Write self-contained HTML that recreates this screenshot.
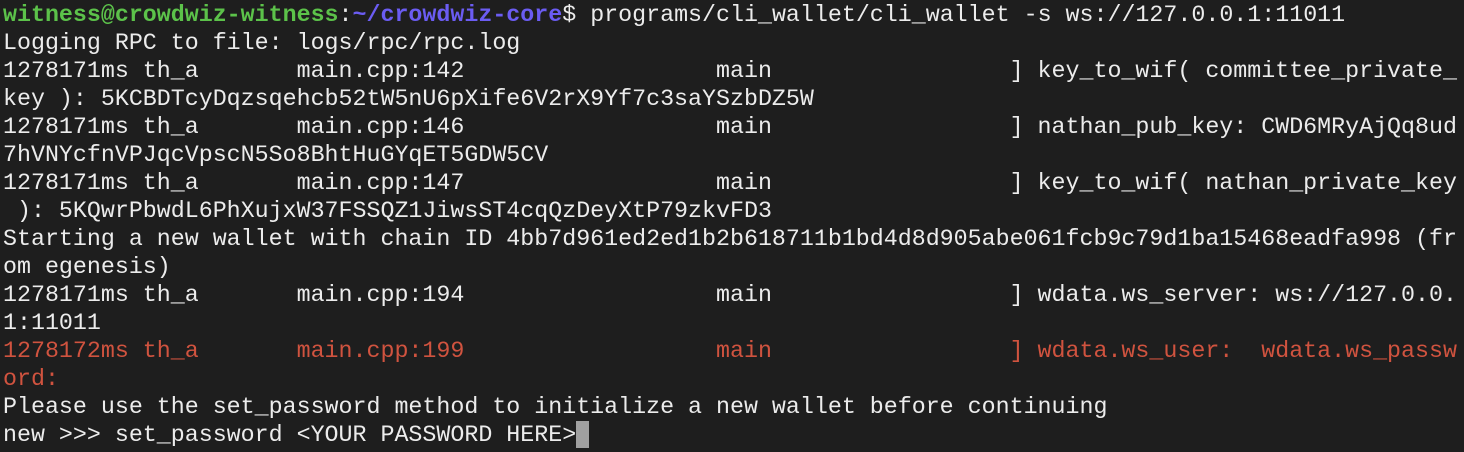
<!DOCTYPE html>
<html><head><style>
html,body{margin:0;padding:0;background:#1e1e1e;width:1464px;height:452px;overflow:hidden}
pre{margin:0;padding:1px 0 0 3px;font-family:"Liberation Mono","DejaVu Sans Mono",monospace;font-size:23.3px;line-height:28px;color:#ececec;white-space:pre}
.g{color:#5cc24a;font-weight:bold}.b{color:#6b5cf2;font-weight:bold}.r{color:#d0533f}
.c{display:inline-block;width:13px;height:27px;background:#a0a0a0;vertical-align:-7px}
</style></head><body><pre><span class="g">witness@crowdwiz-witness</span>:<span class="b">~/crowdwiz-core</span>$ programs/cli_wallet/cli_wallet -s ws://127.0.0.1:11011
Logging RPC to file: logs/rpc/rpc.log
1278171ms th_a       main.cpp:142                  main                 ] key_to_wif( committee_private_
key ): 5KCBDTcyDqzsqehcb52tW5nU6pXife6V2rX9Yf7c3saYSzbDZ5W
1278171ms th_a       main.cpp:146                  main                 ] nathan_pub_key: CWD6MRyAjQq8ud
7hVNYcfnVPJqcVpscN5So8BhtHuGYqET5GDW5CV
1278171ms th_a       main.cpp:147                  main                 ] key_to_wif( nathan_private_key
 ): 5KQwrPbwdL6PhXujxW37FSSQZ1JiwsST4cqQzDeyXtP79zkvFD3
Starting a new wallet with chain ID 4bb7d961ed2ed1b2b618711b1bd4d8d905abe061fcb9c79d1ba15468eadfa998 (fr
om egenesis)
1278171ms th_a       main.cpp:194                  main                 ] wdata.ws_server: ws://127.0.0.
1:11011
<span class="r">1278172ms th_a       main.cpp:199                  main                 ] wdata.ws_user:  wdata.ws_passw
ord:</span>
Please use the set_password method to initialize a new wallet before continuing
new &gt;&gt;&gt; set_password &lt;YOUR PASSWORD HERE&gt;<span class="c"></span></pre></body></html>
